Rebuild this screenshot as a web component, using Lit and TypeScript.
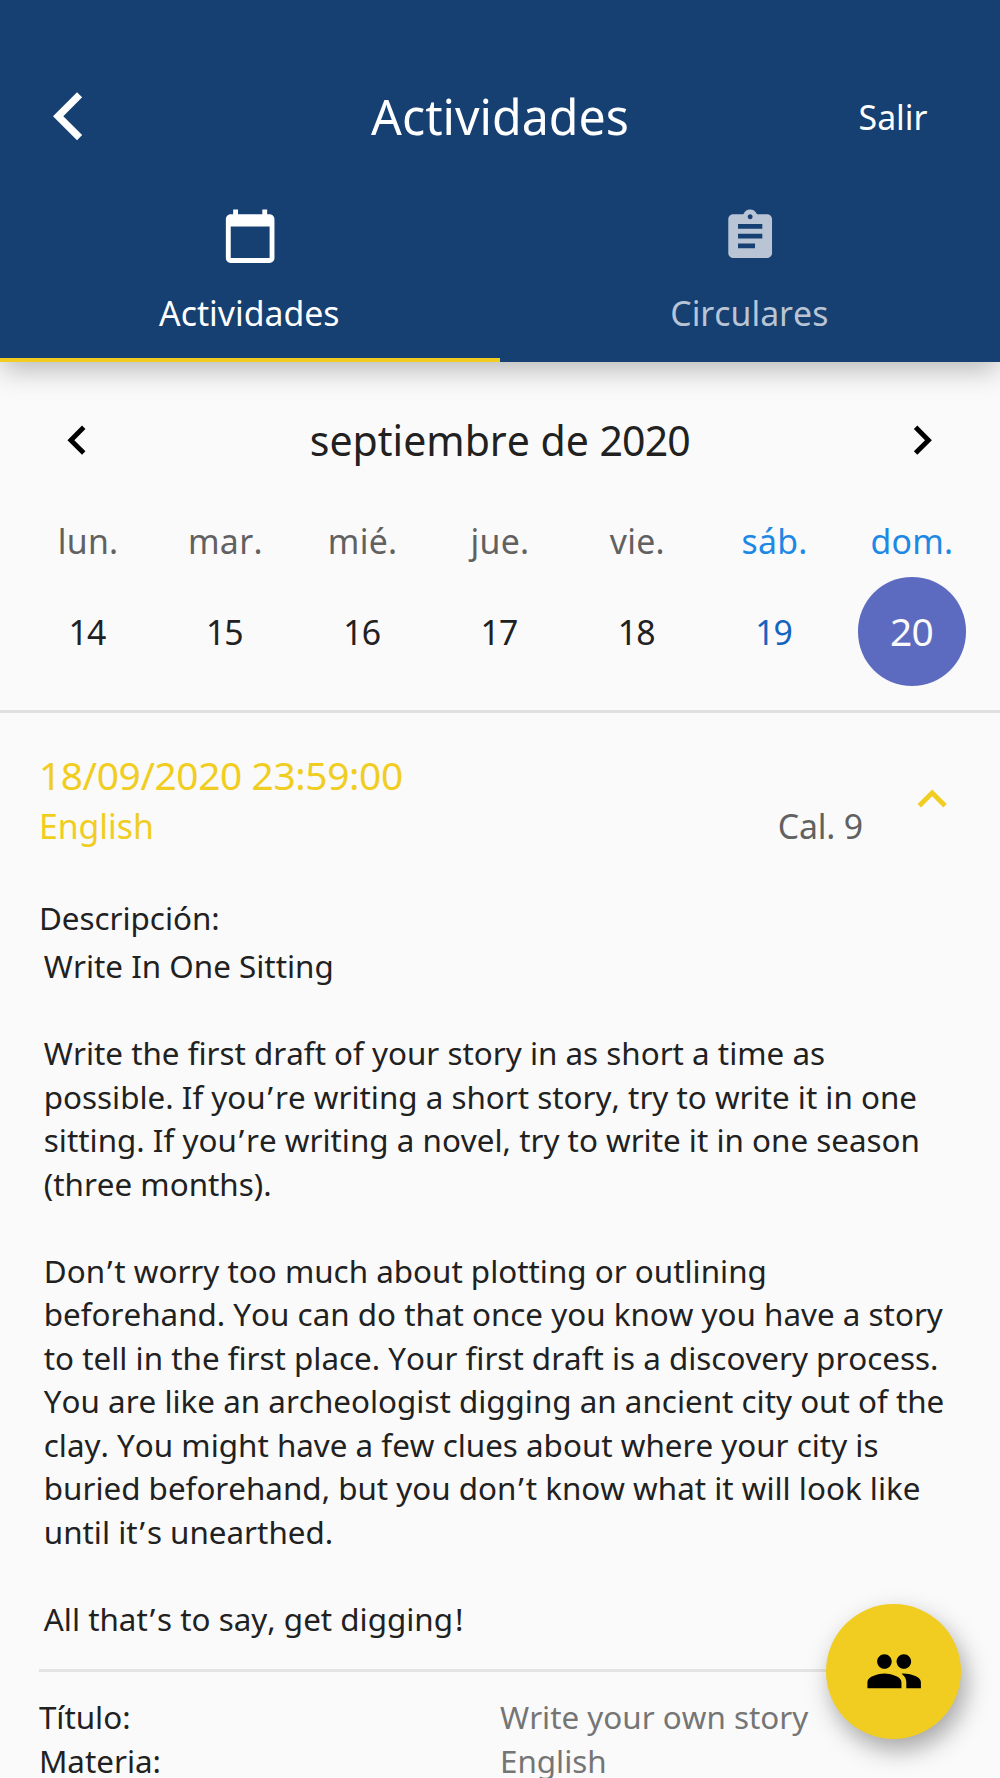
import { LitElement, html, css, svg } from "lit";
import { customElement, state } from "lit/decorators.js";
import { classMap } from "lit/directives/class-map.js";

const ICONS = {
  back: "M12 4.24L9.88 2.12 0 12l9.88 9.88L12 19.76 4.24 12z",
  calendar:
    "M20 3h-1V1h-2v2H7V1H5v2H4c-1.1 0-2 .9-2 2v16c0 1.1.9 2 2 2h16c1.1 0 2-.9 2-2V5c0-1.1-.9-2-2-2zm0 18H4V8h16v13z",
  assignment:
    "M19 3h-4.18C14.4 1.84 13.3 1 12 1c-1.3 0-2.4.84-2.82 2H5c-1.1 0-2 .9-2 2v14c0 1.1.9 2 2 2h14c1.1 0 2-.9 2-2V5c0-1.1-.9-2-2-2zm-7 0c.55 0 1 .45 1 1s-.45 1-1 1-1-.45-1-1 .45-1 1-1zm2 14H7v-2h7v2zm3-4H7v-2h10v2zm0-4H7V7h10v2z",
  left: "M15.41 7.41L14 6l-6 6 6 6 1.41-1.41L10.83 12z",
  right: "M10 6L8.59 7.41 13.17 12l-4.58 4.59L10 18l6-6z",
  less: "M12 8l-6 6 1.41 1.41L12 10.83l4.59 4.58L18 14z",
  people:
    "M16 11c1.66 0 2.99-1.34 2.99-3S17.66 5 16 5c-1.66 0-3 1.34-3 3s1.34 3 3 3zm-8 0c1.66 0 2.99-1.34 2.99-3S9.66 5 8 5C6.34 5 5 6.34 5 8s1.34 3 3 3zm0 2c-2.33 0-7 1.17-7 3.5V19h14v-2.5c0-2.33-4.67-3.5-7-3.5zm8 0c-.29 0-.62.02-.97.05 1.16.84 1.97 1.97 1.97 3.45V19h6v-2.5c0-2.33-4.67-3.5-7-3.5z",
};

const icon = (name: keyof typeof ICONS) => html`
  <svg class="icon" viewBox="0 0 24 24">${svg`<path d=${ICONS[name]}></path>`}</svg>
`;

/* Gives apostrophes and exclamation marks a little air on both sides. */
const spaced = (line: string) =>
  line
    .split(/([’!])/)
    .filter((part) => part !== "")
    .map((part) => (part === "’" || part === "!" ? html`<span class="mark">${part}</span>` : part));

const WEEK = [
  { name: "lun.", day: 14 },
  { name: "mar.", day: 15 },
  { name: "mié.", day: 16 },
  { name: "jue.", day: 17 },
  { name: "vie.", day: 18 },
  { name: "sáb.", day: 19, weekend: true },
  { name: "dom.", day: 20, weekend: true },
];

const DESCRIPTION = [
  ["Write In One Sitting"],
  [
    "Write the first draft of your story in as short a time as",
    "possible. If you’re writing a short story, try to write it in one",
    "sitting. If you’re writing a novel, try to write it in one season",
    "(three months).",
  ],
  [
    "Don’t worry too much about plotting or outlining",
    "beforehand. You can do that once you know you have a story",
    "to tell in the first place. Your first draft is a discovery process.",
    "You are like an archeologist digging an ancient city out of the",
    "clay. You might have a few clues about where your city is",
    "buried beforehand, but you don’t know what it will look like",
    "until it’s unearthed.",
  ],
  ["All that’s to say, get digging!"],
];

@customElement("app-root")
export class AppRoot extends LitElement {
  @state() private selected = 20;

  static styles = css`
    :host {
      display: block;
      position: relative;
      height: 1778px;
      overflow: hidden;
      background: #fafafa;
      color: #212121;
      font-family: "Noto Sans", sans-serif;
      font-size: 33.8px;
      font-kerning: none;
      white-space: nowrap;
    }
    .icon {
      display: block;
      flex: none;
      width: 58.33px;
      height: 58.33px;
      fill: currentColor;
    }
    .header {
      position: relative;
      box-sizing: border-box;
      height: 362.3px;
      padding-top: 58px;
      background: #163f72;
      color: #fff;
      box-shadow: 0 9px 27px -2px rgba(0, 0, 0, 0.28);
    }
    .bar {
      display: grid;
      grid-template-columns: 1fr auto 1fr;
      align-items: center;
      height: 116px;
    }
    .bar .icon {
      margin-left: 53.3px;
    }
    .title {
      font-size: 48.3px;
      line-height: 66px;
    }
    .exit {
      justify-self: end;
      line-height: 46px;
      padding: 2px 72.5px 0 0;
    }
    .tabs {
      display: grid;
      grid-template-columns: 1fr 1fr;
      height: 188.3px;
    }
    .tab {
      box-sizing: border-box;
      display: flex;
      flex-direction: column;
      align-items: center;
      gap: 25.2px;
      padding-top: 32.5px;
      border-bottom: 4.8px solid transparent;
      line-height: 46px;
      color: #b9c5d5;
    }
    .tab span {
      padding-right: 1.4px;
    }
    .tab.active {
      color: #fff;
      border-color: #f0cd20;
    }
    .month {
      display: flex;
      justify-content: space-between;
      align-items: center;
      height: 155px;
      padding: 0 48.2px 0 47.8px;
      font-size: 41px;
    }
    .month .icon {
      color: #000;
    }
    .month-name {
      line-height: 56px;
      padding-top: 1px;
    }
    .year {
      letter-spacing: -0.9px;
    }
    .week {
      display: grid;
      grid-template-columns: repeat(7, 1fr);
      padding: 0 19.4px 24px;
      border-bottom: 3px solid #e0e0e0;
    }
    .day {
      display: flex;
      flex-direction: column;
      align-items: center;
      gap: 13px;
    }
    .weekday {
      line-height: 46px;
      padding-top: 1px;
      color: #616161;
      letter-spacing: 0.3px;
    }
    .number {
      box-sizing: border-box;
      display: flex;
      align-items: center;
      justify-content: center;
      width: 108.4px;
      height: 108.4px;
      padding: 2px 2px 0 0;
      border-radius: 50%;
      letter-spacing: -0.9px;
    }
    .weekend .weekday {
      color: #1e88e5;
    }
    .weekend .number {
      color: #1565c0;
    }
    .day .number.selected {
      padding: 0 1px 2px 0;
      background: #5c6bc0;
      color: #fafafa;
      font-size: 38.9px;
    }
    .entry {
      padding: 0 38.9px;
    }
    .summary {
      display: flex;
      align-items: center;
      height: 174.4px;
      margin-top: -0.3px;
    }
    .info {
      flex: 1;
      display: flex;
      flex-direction: column;
    }
    .date {
      font-size: 38.9px;
      line-height: 49px;
      padding-bottom: 4px;
      color: #f0cd20;
      letter-spacing: -0.39px;
    }
    .subject {
      display: flex;
      justify-content: space-between;
      line-height: 46px;
      padding-right: 40px;
      color: #f0cd20;
    }
    .grade {
      color: #616161;
      letter-spacing: -0.2px;
    }
    .summary .icon {
      color: #f0cd20;
    }
    .body {
      font-size: 31.36px;
      line-height: 43.5px;
    }
    .label {
      padding-top: 9px;
    }
    .text {
      display: flex;
      flex-direction: column;
      gap: 43.5px;
      padding: 4.9px 0 28.6px 4.9px;
      border-bottom: 3px solid #e4e4e4;
    }
    .mark {
      padding: 0 1.9px;
    }
    .details {
      display: grid;
      grid-template-columns: 1fr 1fr;
      padding-top: 23.5px;
    }
    .value {
      color: #757575;
    }
    .fab {
      position: absolute;
      left: 826.2px;
      top: 1604px;
      width: 135.3px;
      height: 135.3px;
      display: flex;
      align-items: center;
      justify-content: center;
      padding: 0;
      border: 0;
      border-radius: 50%;
      background: #f0cd20;
      color: #000;
      box-shadow: 5px 11px 24px rgba(0, 0, 0, 0.34);
    }
  `;

  render() {
    return html`
      <header class="header">
        <div class="bar">
          ${icon("back")}
          <div class="title">Actividades</div>
          <div class="exit">Salir</div>
        </div>
        <nav class="tabs">
          <div class="tab active">${icon("calendar")}<span>Actividades</span></div>
          <div class="tab">${icon("assignment")}<span>Circulares</span></div>
        </nav>
      </header>
      <div class="month">
        ${icon("left")}
        <div class="month-name">septiembre de <span class="year">2020</span></div>
        ${icon("right")}
      </div>
      <div class="week">
        ${WEEK.map(
          (d) => html`
            <div class=${classMap({ day: true, weekend: !!d.weekend })}>
              <div class="weekday">${d.name}</div>
              <div
                class=${classMap({ number: true, selected: d.day === this.selected })}
                @click=${() => (this.selected = d.day)}
              >${d.day}</div>
            </div>
          `
        )}
      </div>
      <section class="entry">
        <div class="summary">
          <div class="info">
            <div class="date">18/09/2020 23:59:00</div>
            <div class="subject"><span>English</span><span class="grade">Cal. 9</span></div>
          </div>
          ${icon("less")}
        </div>
        <div class="body">
          <div class="label">Descripción:</div>
          <div class="text">
            ${DESCRIPTION.map(
              (p) => html`<div>${p.map((line) => html`<div>${spaced(line)}</div>`)}</div>`
            )}
          </div>
          <div class="details">
            <div>Título:</div>
            <div class="value">Write your own story</div>
            <div>Materia:</div>
            <div class="value">English</div>
          </div>
        </div>
      </section>
      <button class="fab">${icon("people")}</button>
    `;
  }
}
